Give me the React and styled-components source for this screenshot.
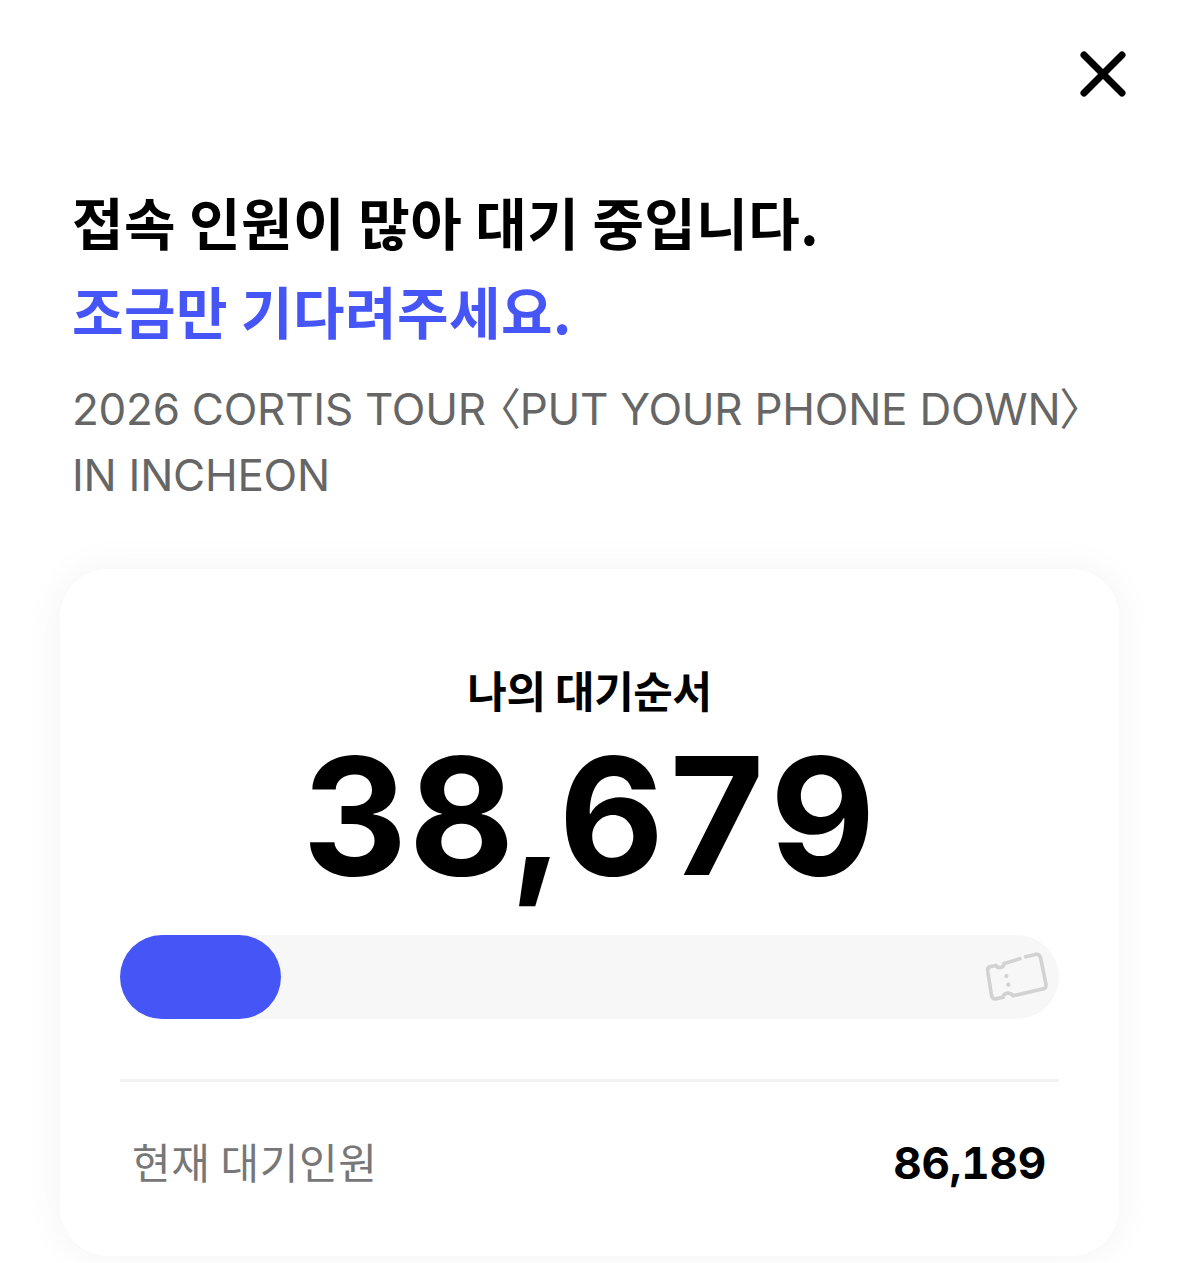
import React from 'react';
import styled, { createGlobalStyle } from 'styled-components';

const GlobalStyle = createGlobalStyle`
  html, body {
    margin: 0;
    padding: 0;
    background: #ffffff;
  }
  body {
    font-family: Inter, "Noto Sans CJK KR", sans-serif;
    overflow: hidden;
  }
`;

const Page = styled.div`
  width: 1179px;
  height: 1263px;
  padding: 0 60px;
  box-sizing: border-box;
  overflow: hidden;
`;

const TopBar = styled.div`
  display: flex;
  justify-content: flex-end;
  height: 176px;
  padding: 44px 0 0;
  box-sizing: border-box;
  margin-right: -14px;
`;

const CloseButton = styled.button`
  width: 60px;
  height: 60px;
  padding: 0;
  border: 0;
  background: none;
`;

const Intro = styled.div`
  padding-left: 12px;
`;

const Title = styled.h1`
  margin: 0;
  font-size: 56px;
  line-height: 89px;
  font-weight: 700;
  letter-spacing: 0.45px;
  color: ${(props) => props.$color};
  font-family: "Noto Sans CJK KR", sans-serif;
`;

const Subtitle = styled.p`
  margin: 22px 0 0;
  font-size: 44px;
  line-height: 66px;
  font-weight: 400;
  color: #666666;
  letter-spacing: -0.25px;
  white-space: nowrap;
`;

const Bracket = styled.span`
  font-family: "Noto Sans CJK KR", sans-serif;
  font-feature-settings: "palt";
  line-height: 1;
`;

const Card = styled.section`
  margin-top: 61px;
  height: 687px;
  padding: 90px 60px 0;
  box-sizing: border-box;
  border-radius: 48px;
  background: #ffffff;
  box-shadow: 0 0 40px rgba(0, 0, 0, 0.05);
`;

const QueueLabel = styled.div`
  text-align: center;
  font-size: 43px;
  line-height: 60px;
  font-weight: 700;
  color: #000000;
  letter-spacing: -0.4px;
  font-family: "Noto Sans CJK KR", sans-serif;
`;

const QueueNumber = styled.div`
  margin-top: 12px;
  text-align: center;
  font-size: 163px;
  line-height: 170px;
  font-weight: 700;
  color: #000000;
  font-variant-numeric: tabular-nums;
  letter-spacing: 0.3px;
`;

const ProgressTrack = styled.div`
  position: relative;
  margin-top: 34px;
  height: 84px;
  border-radius: 42px;
  background: #f7f7f7;
`;

const ProgressFill = styled.div`
  height: 100%;
  border-radius: 42px;
  background: #4655f5;
`;

const TicketIcon = styled.svg`
  position: absolute;
  right: 11px;
  top: 17px;
`;

const Divider = styled.hr`
  margin: 60px 0 0;
  border: 0;
  height: 3px;
  background: #f2f2f2;
`;

const StatRow = styled.div`
  display: flex;
  align-items: center;
  justify-content: space-between;
  margin-top: 44px;
  padding: 0 13px 0 12px;
`;

const StatLabel = styled.span`
  font-size: 42px;
  line-height: 70px;
  padding-bottom: 4px;
  color: #777777;
  letter-spacing: 0.6px;
  font-family: "Noto Sans CJK KR", sans-serif;
`;

const StatValue = styled.span`
  font-size: 44px;
  line-height: 72px;
  font-weight: 700;
  color: #000000;
  font-variant-numeric: tabular-nums;
  letter-spacing: -0.2px;
`;

function App() {
  const position = 161 / 939;

  return (
    <Page>
      <GlobalStyle />
      <TopBar>
        <CloseButton aria-label="닫기">
          <svg width="60" height="60" viewBox="0 0 60 60" fill="none">
            <path d="M11 11L49 49M49 11L11 49" stroke="#000" strokeWidth="7" strokeLinecap="round" />
          </svg>
        </CloseButton>
      </TopBar>
      <Intro>
        <Title $color="#000000">접속 인원이 많아 대기 중입니다.</Title>
        <Title $color="#4655f5">조금만 기다려주세요.</Title>
        <Subtitle>
          2026 CORTIS TOUR <Bracket>〈</Bracket>PUT YOUR PHONE DOWN<Bracket>〉</Bracket>
          <br />
          IN INCHEON
        </Subtitle>
      </Intro>
      <Card>
        <QueueLabel>나의 대기순서</QueueLabel>
        <QueueNumber>38,679</QueueNumber>
        <ProgressTrack>
          <ProgressFill style={{ width: `${position * 100}%` }} />
          <TicketIcon width="62" height="50" viewBox="0 0 64 52" fill="none">
            <path
              d="M41 5L51 2.5Q55.5 1.5 56.5 6L62 33Q63 37.5 58.5 38.5L28 45.5Q25 42 21 43Q18 44 17.5 47L11 48.5Q6.5 49.500 5.500 45L1.500 20Q1 15.500 5 15L10 14Q12 17 15.500 16Q18.500 15 18.500 12L35 7"
              stroke="#d2d2d2"
              strokeWidth="3.800"
              strokeLinecap="round"
            />
            <circle cx="21" cy="25" r="2.200" fill="#d2d2d2" />
            <circle cx="23" cy="34" r="2.200" fill="#d2d2d2" />
          </TicketIcon>
        </ProgressTrack>
        <Divider />
        <StatRow>
          <StatLabel>현재 대기인원</StatLabel>
          <StatValue>86,189</StatValue>
        </StatRow>
      </Card>
    </Page>
  );
}

export default App;
